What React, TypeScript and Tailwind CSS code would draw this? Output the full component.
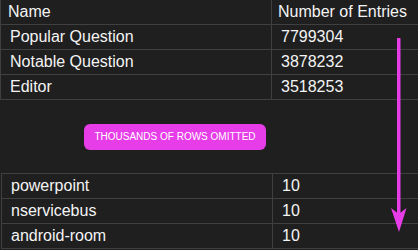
import React from "react";

const top = [
  ["Popular Question", "7799304"],
  ["Notable Question", "3878232"],
  ["Editor", "3518253"],
];
const bottom = [
  ["powerpoint", "10"],
  ["nservicebus", "10"],
  ["android-room", "10"],
];

function Row({ a, b, header }: { a: string; b: string; header?: boolean }) {
  return (
    <div className="flex h-[25px] border-b border-[#404040]">
      <div className={`flex w-[271px] items-center border-r border-[#404040] ${header ? "pl-[7px]" : "pl-[9px]"}`}>
        {a}
      </div>
      <div className={`flex flex-1 items-center ${header ? "pl-[6px]" : "pl-[9px]"}`}>{b}</div>
    </div>
  );
}

export default function App() {
  return (
    <div
      className="relative h-[250px] w-[418px] overflow-hidden bg-[#1f1f1f] text-[16px] text-[#f4f4f4]"
      style={{ fontFamily: '"Liberation Sans", Arial, sans-serif' }}
    >
      <div className="w-[430px] border-l border-[#404040]">
        <Row a="Name" b="Number of Entries" header />
        {top.map(([a, b]) => (
          <Row key={a} a={a} b={b} />
        ))}
      </div>
      <div className="flex h-[73px] items-center pl-[84px]">
        <div className="flex h-[26px] w-[182px] items-center justify-center rounded-md bg-[#e73de8] text-[10px] text-white">
          THOUSANDS OF ROWS OMITTED
        </div>
      </div>
      <div className="ml-px w-[430px] border-l border-t border-[#404040]">
        {bottom.map(([a, b]) => (
          <Row key={a} a={a} b={b} />
        ))}
      </div>
      <svg className="absolute left-[388px] top-[36px]" width="22" height="200" viewBox="0 0 22 200">
        <rect x="9" y="2" width="3.5" height="176" fill="#e73de8" />
        <polygon points="3,172 10.75,178 18.5,172 11,196" fill="#e73de8" />
      </svg>
    </div>
  );
}
